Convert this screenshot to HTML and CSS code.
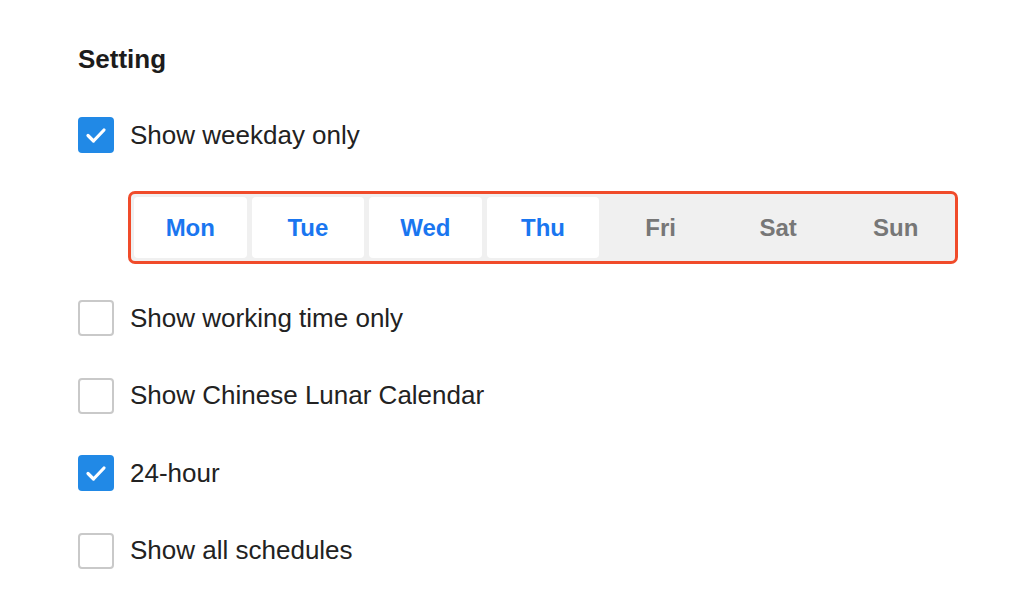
FILE: index.html
```html
<!DOCTYPE html>
<html lang="en">
<head>
  <meta charset="UTF-8">
  <meta name="viewport" content="width=device-width, initial-scale=1.0">
  <title>Setting</title>
  <link rel="stylesheet" href="styles.css">
</head>
<body>

  <div class="settings">
    <h2>Setting</h2>

    <label class="option">
      <span class="box checked">
        <svg viewBox="0 0 36 36" width="36" height="36"><path d="M10 18.5l5.5 5.5L26 13" fill="none" stroke="#fff" stroke-width="3.2" stroke-linecap="round" stroke-linejoin="round"/></svg>
      </span>
      Show weekday only
    </label>

    <div class="days">
      <span class="day on">Mon</span>
      <span class="day on">Tue</span>
      <span class="day on">Wed</span>
      <span class="day on">Thu</span>
      <span class="day">Fri</span>
      <span class="day">Sat</span>
      <span class="day">Sun</span>
    </div>

    <label class="option">
      <span class="box"></span>
      Show working time only
    </label>

    <label class="option">
      <span class="box"></span>
      Show Chinese Lunar Calendar
    </label>

    <label class="option">
      <span class="box checked">
        <svg viewBox="0 0 36 36" width="36" height="36"><path d="M10 18.5l5.5 5.5L26 13" fill="none" stroke="#fff" stroke-width="3.2" stroke-linecap="round" stroke-linejoin="round"/></svg>
      </span>
      24-hour
    </label>

    <label class="option">
      <span class="box"></span>
      Show all schedules
    </label>
  </div>

</body>
</html>
```

FILE: styles.css
```css
body {
  font-family: "Liberation Sans", Arial, sans-serif;
  background-color: #fff;
  margin: 0;
  color: #222;
}
.settings {
  display: flex;
  flex-direction: column;
  padding: 44px 0 0 78px;
}
h2 {
  margin: 0 0 43px;
  font-size: 26px;
  line-height: 30px;
  font-weight: bold;
  color: #1c1c1c;
}
.option {
  display: flex;
  align-items: center;
  gap: 16px;
  height: 36px;
  font-size: 26px;
  color: #222;
  margin-bottom: 41.5px;
}
.box {
  width: 36px;
  height: 36px;
  box-sizing: border-box;
  border: 2px solid #c9c9c9;
  border-radius: 4px;
  flex-shrink: 0;
}
.box.checked {
  border: none;
  background-color: #2189e6;
}
.box svg {
  display: block;
}
.days {
  display: grid;
  grid-template-columns: repeat(7, 1fr);
  gap: 5px;
  width: 830px;
  box-sizing: border-box;
  margin: -3.5px 0 36px 50px;
  padding: 3px;
  border: 3px solid #f04b2a;
  border-radius: 7px;
  background-color: #f0f0f0;
}
.day {
  height: 61px;
  display: flex;
  align-items: center;
  justify-content: center;
  font-size: 24px;
  font-weight: bold;
  color: #777;
  border-radius: 4px;
}
.day.on {
  background-color: #fff;
  color: #1a76f0;
}
```
